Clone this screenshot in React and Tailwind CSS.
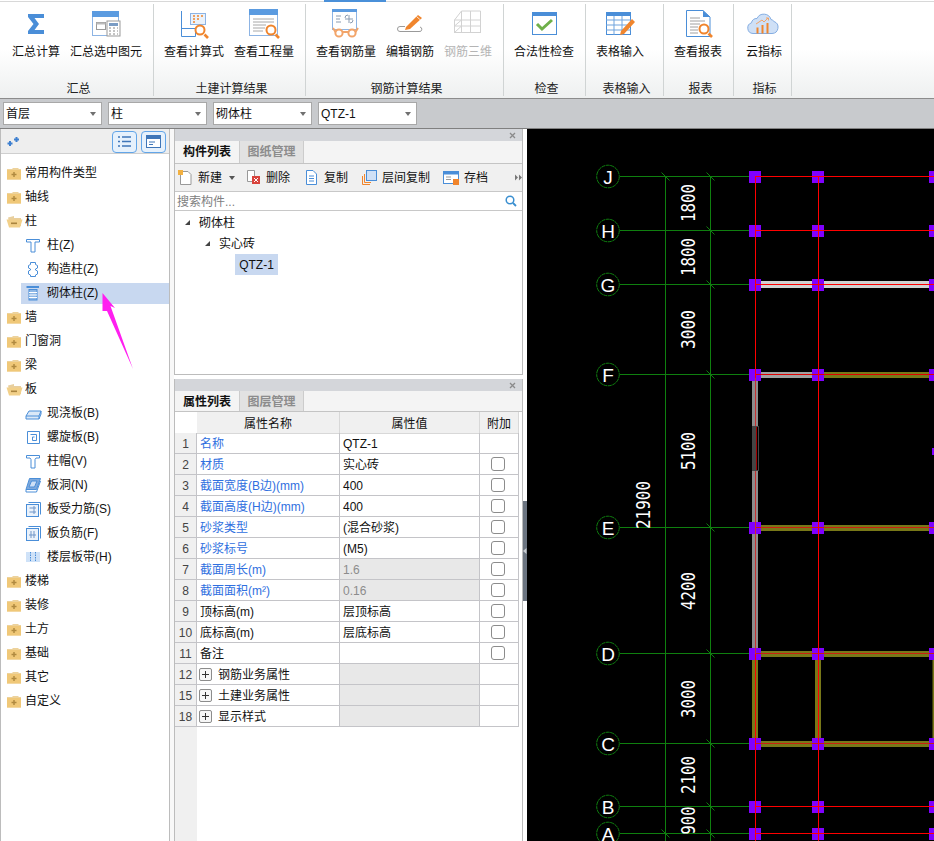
import React from "react";

const BLUE = "#4a8ed8";
const OR = "#f0852d";

const Mag = ({ x, y, r = 4.5 }) => (
  <g fill="none" stroke={OR}>
    <circle cx={x} cy={y} r={r} strokeWidth="2" fill="#fff" />
    <path d={`M${x + r} ${y + r}L${x + r + 3.5} ${y + r + 3.5}`} strokeWidth="2.6" />
  </g>
);

const Ribbon = {
  sigma: <path d="M12 7H28V11H18.5L23 17L18.5 23H28V27H12V24L17.5 17L12 10Z" fill={BLUE} />,
  sel: (
    <g>
      <rect x="6.5" y="4.5" width="26" height="24" fill="#fff" stroke="#8db4e4" />
      <rect x="6" y="4" width="27" height="6" fill="#5b9be0" />
      <rect x="10.5" y="15.5" width="9" height="7" fill="none" stroke="#9a9a9a" />
      <rect x="10.5" y="15.5" width="9" height="2" fill="#bbb" />
      <rect x="21" y="14" width="13" height="15" fill="#fff" stroke="#999" />
      <rect x="23" y="16" width="9" height="3" fill="#7a9cc4" />
      <path d="M23 21h2m2 0h2m2 0h1M23 24h2m2 0h2m2 0h1M23 27h2m2 0h2m2 0h1" stroke="#888" />
    </g>
  ),
  calc: (
    <g>
      <path d="M7.5 4V29.5H21.5V21.5H8" fill="none" stroke={BLUE} />
      <rect x="16.5" y="6.5" width="15" height="11" fill="#eaf2fb" stroke="#8db4e4" />
      <path d="M19 9h2m2 0h2m2 0h2M19 12h2m2 0h2M19 15h2" stroke={OR} strokeWidth="1.6" />
      <Mag x={26} y={23} />
    </g>
  ),
  qty: (
    <g>
      <rect x="5.5" y="2.5" width="28" height="26" fill="#fff" stroke="#8db4e4" />
      <rect x="5" y="2" width="29" height="6" fill="#5b9be0" />
      <path d="M9 12h21M9 15h21M9 18h13M9 21h12M9 24h10" stroke="#a8a8a8" />
      <Mag x={27} y={23} />
    </g>
  ),
  steel: (
    <g>
      <rect x="6.5" y="2.5" width="24" height="20" fill="#fff" stroke="#8db4e4" />
      <rect x="6" y="2" width="25" height="3" fill="#5b9be0" />
      <path d="M10 9h5M10 12h4M10 15h5M19 12h8M23 8v8" stroke="#8a9bb0" />
      <path d="M19 11a3 3 0 0 1 3-3M24 16a3 3 0 0 0 3-3" stroke="#8a9bb0" fill="none" />
      <g fill="#fff" stroke="#f2a469" strokeWidth="2">
        <circle cx="13" cy="26" r="3.6" />
        <circle cx="26" cy="26" r="3.6" />
        <path d="M16.5 25h6M9.5 25L7 21M29.5 25L32 21" fill="none" />
      </g>
    </g>
  ),
  edit: (
    <g>
      <path d="M15 19.5H10a2.3 2.3 0 0 0 0 5H29a2.3 2.3 0 0 0 1-4.5" fill="none" stroke="#9a9a9a" />
      <path d="M16 20L28 8L32 11L20 22L15 23Z" fill={OR} />
      <path d="M26.5 9.5L30.5 13" stroke="#fff" strokeWidth="0.8" />
    </g>
  ),
  three: (
    <g fill="none" stroke="#d2d2d2">
      <path d="M13.5 4V26M22.5 4V26M32.5 4V26M6.5 13V26M6.5 13L13.5 4M32.5 13H6.5M32.5 19H6.5M32.5 25.5H6.5M6.5 19L13.5 13M6.5 25.5L13.5 19M13.5 4H32.5" />
    </g>
  ),
  check: (
    <g>
      <rect x="8.5" y="5.5" width="24" height="22" fill="#fff" stroke={BLUE} />
      <rect x="8" y="5" width="25" height="4" fill={BLUE} />
      <path d="M13 17L18 22L28 13" fill="none" stroke="#6fb04a" strokeWidth="3" />
    </g>
  ),
  table: (
    <g>
      <rect x="6.5" y="5.5" width="24" height="22" fill="#fff" stroke={BLUE} />
      <rect x="6" y="5" width="25" height="4" fill={BLUE} />
      <path d="M6 13h25M6 18h25M6 23h25M14 9v19M22 9v19" stroke="#6ea3dd" />
      <path d="M21 24L32 12L35 15L24 27L20 28Z" fill={OR} />
    </g>
  ),
  report: (
    <g>
      <path d="M8.5 3.5H25L32 10V29.5H8.5Z" fill="#fff" stroke={BLUE} />
      <path d="M25 3.5V10H32Z" fill={BLUE} />
      <path d="M12 11h10M12 14h15M12 17h10M12 20h8M12 23h8M12 26h8" stroke="#a0a0a0" />
      <Mag x={26} y={22} />
    </g>
  ),
  cloud: (
    <g>
      <path d="M9 26.5A5.5 5.5 0 0 1 7.5 15.8A5 5 0 0 1 13 11.5A7.5 7.5 0 0 1 27 12.5A5 5 0 0 1 30 14.5A6.2 6.2 0 0 1 28 26.5Z" fill="#cfe0f6" stroke="#84ade2" />
      <path d="M12.5 20.5h2v6h-2zM17.5 18h2v8.5h-2zM22.5 16h2v10.5h-2z" fill={OR} />
      <path d="M12 17L18 13L20 15L24 11M22 11h2.5v2.5" fill="none" stroke="#f2a469" />
    </g>
  ),
};

const RibbonBtn = ({ icon, label, muted }) => (
  <div className="flex flex-col items-center">
    <div className="w-[40px] h-[32px] mt-[3px]">
      <svg width="40" height="32" viewBox="0 0 40 32">{Ribbon[icon]}</svg>
    </div>
    <div className={`text-[12px] leading-[14px] mt-[6px] whitespace-nowrap ${muted ? "text-[#b4b4b4]" : "text-[#111]"}`}>{label}</div>
  </div>
);

const groups = [
  { w: "w-[154px]", pl: "pl-[12px]", label: "汇总", items: [["sigma", "汇总计算"], ["sel", "汇总选中图元"]] },
  { w: "w-[152px]", pl: "pl-[10px]", label: "土建计算结果", items: [["calc", "查看计算式"], ["qty", "查看工程量"]] },
  { w: "w-[198px]", pl: "pl-[10px]", label: "钢筋计算结果", items: [["steel", "查看钢筋量"], ["edit", "编辑钢筋"], ["three", "钢筋三维", true]] },
  { w: "w-[82px]", pl: "pl-[10px]", label: "检查", items: [["check", "合法性检查"]] },
  { w: "w-[78px]", pl: "pl-[10px]", label: "表格输入", items: [["table", "表格输入"]] },
  { w: "w-[70px]", pl: "pl-[10px]", label: "报表", items: [["report", "查看报表"]] },
  { w: "w-[58px]", pl: "pl-[10px]", label: "指标", items: [["cloud", "云指标"]] },
];

const Combo = ({ label, w = "w-[99px]" }) => (
  <div className={`${w} h-[23px] bg-white border border-[#a8a8a8] flex items-center justify-between pl-[2px] pr-[5px] text-[12px] text-[#111]`}>
    <span className="pt-[1px]">{label}</span>
    <span className="w-0 h-0 border-x-[3.5px] border-x-transparent border-t-[4px] border-t-[#707070]" />
  </div>
);

const Folder = ({ open }) => (
  <svg width="17" height="13" viewBox="0 0 17 13" className="shrink-0">
    {open ? (
      <g>
        <path d="M2 2.5L8 1V3H15V11H4Z" fill="#e8cf9e" />
        <path d="M0.5 4.5H16.5L14 12.5H3Z" fill="#f2d089" />
        <rect x="5" y="7.5" width="6" height="1.6" fill="#a9843e" />
      </g>
    ) : (
      <g>
        <path d="M1 2H6L7 1H12L13 2H15V12.5H1Z" fill="#edd29b" />
        <rect x="1" y="3" width="14" height="9.5" fill="#f0c878" />
        <path d="M5.5 7.5h5M8 5v5" stroke="#b08a40" strokeWidth="1.5" />
      </g>
    )}
  </svg>
);

const S = "#4a8ed8";
const Sub = {
  col: <path d="M1.5 2.5H14.5V5H10V15H6V5H1.5Z" fill="#fff" stroke={S} />,
  gz: <path d="M5.5 1.5H10.5V3.5L12.5 4.5V7L10.5 8V9L12.5 10V13L10.5 14V15.5H5.5V14L3.5 13V10L5.5 9V8L3.5 7V4.5L5.5 3.5Z" fill="#fff" stroke={S} />,
  brick: (
    <g>
      <path d="M1.5 2H14" stroke={S} strokeWidth="2" />
      <rect x="4" y="4.5" width="8" height="10.5" fill="#8fb8e6" stroke={S} />
      <path d="M4 7.5h8M4 10h8M4 12.5h8" stroke="#fff" />
    </g>
  ),
  slab: <path d="M1 11L4 6H16L14 11ZM1 11V14H14V11M14 14L16 9V6" fill="#dbe8f7" stroke={S} />,
  spiral: <path d="M2.5 2.5H14.5V14.5H2.5ZM5.5 5.5H11.5V11.5H7.5V8H9.5" fill="none" stroke={S} />,
  cap: <path d="M1.5 2.5H14.5V5H11L10 6.5V15H6V6.5L5 5H1.5Z" fill="#fff" stroke={S} />,
  hole: (
    <g>
      <path d="M4.5 1.5H15.5L11.5 12.5H1Z" fill="#7fa9dc" stroke={S} />
      <path d="M1 12.5V15H11.5L15.5 4" fill="none" stroke={S} />
      <path d="M6.5 4H12L9.5 10H4Z" fill="#cfe0f6" stroke={S} />
    </g>
  ),
  r1: (
    <g fill="none" stroke={S}>
      <rect x="1.5" y="3.5" width="12" height="12" fill="#eaf2fb" />
      <path d="M3.5 1.5H15.5V13.5" />
      <path d="M4.5 7H11M4.5 11H11M9 5V13" stroke="#6e95c8" />
    </g>
  ),
  r2: (
    <g fill="none" stroke={S}>
      <rect x="1.5" y="3.5" width="12" height="12" fill="#eaf2fb" />
      <path d="M3.5 1.5H15.5V13.5" />
      <path d="M4 10H11M6 6V13M9 6V13" stroke="#6e95c8" />
    </g>
  ),
  band: (
    <g>
      <rect x="1" y="3" width="14" height="10" fill="#cfe2f8" />
      <path d="M5.5 3V13M10.5 3V13" stroke={S} strokeDasharray="1.5 1" />
    </g>
  ),
};

const TreeTop = ({ label, open }) => (
  <div className="h-[24px] flex items-center pl-[5px] gap-[2px] text-[12px] text-[#111]">
    <div className="w-[17px] flex justify-center"><Folder open={open} /></div>
    <span>{label}</span>
  </div>
);

const TreeSub = ({ icon, label, active }) => (
  <div className="h-[24px] flex items-center">
    <div className={`ml-[20px] flex-1 h-[21px] flex items-center pl-[4px] gap-[5px] text-[12px] text-[#111] ${active ? "bg-[#c8d8f0]" : ""}`}>
      <svg width="17" height="17" viewBox="0 0 17 17" className="shrink-0">{Sub[icon]}</svg>
      <span>{label}</span>
    </div>
  </div>
);

const ToolItem = ({ w = "", children, label, ml = "" }) => (
  <div className={`flex items-center gap-[4px] ${ml} ${w}`}>
    <svg width="17" height="17" viewBox="0 0 17 17" className="shrink-0">{children}</svg>
    <span className="whitespace-nowrap">{label}</span>
  </div>
);

const PanelHead = () => (
  <div className="h-[12px] bg-[#d4d6da] flex items-center justify-end pr-[6px]">
    <svg width="7" height="7" viewBox="0 0 7 7"><path d="M1 1L6 6M6 1L1 6" stroke="#8a8a8a" strokeWidth="1.3" /></svg>
  </div>
);

const Tabs = ({ a, b, h, nudge }) => (
  <div className={`${h} bg-[#f4f4f4] border-b border-[#c4c4c4] flex text-[12px]`}>
    <div className={`w-[64px] flex items-center justify-center font-bold text-[#111] ${nudge}`}>{a}</div>
    <div className={`w-[65px] flex items-center justify-center bg-[#e2e2e2] border-x border-[#cccccc] text-[#8c8c8c] font-bold ${nudge}`}>{b}</div>
  </div>
);

const rows = [
  ["1", "名称", "QTZ-1", 1, 0, 0],
  ["2", "材质", "实心砖", 1, 0, 1],
  ["3", "截面宽度(B边)(mm)", "400", 1, 0, 1],
  ["4", "截面高度(H边)(mm)", "400", 1, 0, 1],
  ["5", "砂浆类型", "(混合砂浆)", 1, 0, 1],
  ["6", "砂浆标号", "(M5)", 1, 0, 1],
  ["7", "截面周长(m)", "1.6", 1, 1, 1],
  ["8", "截面面积(m²)", "0.16", 1, 1, 1],
  ["9", "顶标高(m)", "层顶标高", 0, 0, 1],
  ["10", "底标高(m)", "层底标高", 0, 0, 1],
  ["11", "备注", "", 0, 0, 1],
];
const groupRows = [["12", "钢筋业务属性"], ["15", "土建业务属性"], ["18", "显示样式"]];

const gridCols = "grid grid-cols-[22px_143px_140px_39px]";
const cell = "border-r border-b border-[#c4c4c8] flex items-center";

const PropRow = ({ r }) => (
  <div className={`${gridCols} h-[21px] text-[12px]`}>
    <div className={`${cell} justify-center bg-[#f0f0f0] text-[#444] pt-[1px]`}>{r[0]}</div>
    <div className={`${cell} pl-[3px] pt-[1px] whitespace-nowrap ${r[3] ? "text-[#2f6fe0]" : "text-[#111]"}`}>{r[1]}</div>
    <div className={`${cell} pl-[3px] pt-[1px] ${r[4] ? "bg-[#e8e8e8] text-[#8c8c8c]" : "text-[#111]"}`}>{r[2]}</div>
    <div className={`${cell} justify-center pr-[2px]`}>
      {r[5] ? <div className="w-[14px] h-[14px] rounded-[3px] border border-[#8c8c8c] bg-white" /> : null}
    </div>
  </div>
);

const GroupRow = ({ n, t }) => (
  <div className={`${gridCols} h-[21px] text-[12px]`}>
    <div className={`${cell} justify-center bg-[#f0f0f0] text-[#444] pt-[1px]`}>{n}</div>
    <div className={`${cell} pl-[2px] gap-[6px] text-[#111]`}>
      <div className="w-[13px] h-[13px] rounded-[2px] border border-[#8c8c8c] bg-[#f6f6f6] flex items-center justify-center">
        <svg width="7" height="7" viewBox="0 0 7 7"><path d="M0 3.5H7M3.5 0V7" stroke="#333" /></svg>
      </div>
      <span className="pt-[1px]">{t}</span>
    </div>
    <div className={`${cell} bg-[#e8e8e8]`} />
    <div className={cell} />
  </div>
);

const H = { J: 176.5, H: 230.5, G: 284.5, F: 374.5, E: 527.5, D: 653.5, C: 743.5, B: 806.5, A: 833.5 };
const GREEN = "#0f7f0f";
const OLIVE = "#787818";
const RED = "#ff0000";
const PUR = "#8000ff";

const Dim = ({ x, y, t, len }) => (
  <text
    x={x}
    y={y}
    transform={`rotate(-90 ${x} ${y})`}
    fill="#fff"
    fontFamily="'DejaVu Sans Mono', monospace"
    fontSize="19"
    textAnchor="middle"
    dominantBaseline="central"
    textLength={len}
    lengthAdjust="spacingAndGlyphs"
  >
    {t}
  </text>
);

const Cad = () => (
  <svg width="407" height="712" viewBox="527 129 407 712" className="block bg-black shrink-0">
    {/* walls */}
    <rect x="755" y="281" width="179" height="7" fill="#d0d0d0" />
    <rect x="755" y="372" width="63" height="6" fill="#a0a0a0" />
    <rect x="818" y="372" width="116" height="6" fill={OLIVE} />
    <rect x="752" y="375" width="6" height="279" fill="#8c8c8c" />
    <rect x="755" y="525" width="179" height="6" fill={OLIVE} />
    <rect x="755" y="651" width="179" height="6" fill={OLIVE} />
    <rect x="755" y="741" width="179" height="6" fill={OLIVE} />
    <rect x="752" y="654" width="6" height="90" fill={OLIVE} />
    <rect x="815" y="654" width="6" height="90" fill={OLIVE} />
    <rect x="932.5" y="654" width="2" height="90" fill={OLIVE} />
    {/* green grid */}
    {Object.values(H).map((y) => (
      <path key={y} d={`M620 ${y}H756`} stroke={GREEN} fill="none" />
    ))}
    <path d="M665.5 176V841M710.5 176V841" stroke={GREEN} fill="none" />
    {Object.values(H).map((y) => (
      <path key={y} d={`M706.5 ${y - 4}L714.5 ${y + 4}`} stroke={GREEN} fill="none" />
    ))}
    <path d="M661.5 172.5L669.5 180.5M661.5 829.5L669.5 837.5" stroke={GREEN} fill="none" />
    {/* columns */}
    {Object.values(H).flatMap((y) =>
      [749, 812, 929].map((x) => <rect key={`${x}-${y}`} x={x} y={y - 5.5} width="12" height="12" fill={PUR} />)
    )}
    <rect x="932" y="448" width="2" height="7" fill={PUR} />
    {/* red axes */}
    <path d={`M755 ${H.J}H934M755 ${H.H}H934M755 ${H.G}H934M755 ${H.B}H934M755 ${H.A}H934`} stroke={RED} fill="none" />
    <path d={`M755 ${H.F}H934`} stroke="#e00000" fill="none" />
    <path d={`M755 ${H.E}H934M755 ${H.D}H934M755 ${H.C}H934`} stroke="#c82010" fill="none" />
    <rect x="755" y="176" width="1" height="665" fill={RED} />
    <rect x="755" y="378" width="1" height="276" fill="#c83030" />
    <rect x="818" y="176" width="1" height="665" fill={RED} />
    {/* door */}
    <rect x="752" y="426" width="7" height="45" fill="#444444" />
    <rect x="757" y="427" width="1" height="43" fill="#000000" />
    <rect x="756" y="427" width="1" height="43" fill="#a00000" />
    {/* axis bubbles */}
    {Object.entries(H).map(([k, y]) => (
      <g key={k}>
        <circle cx="608" cy={y} r="11.3" fill="#000" stroke={GREEN} strokeDasharray="4 0.6" />
        <text
          x="608"
          y={y + 0.5}
          fill="#fff"
          fontFamily="'Liberation Sans', sans-serif"
          fontSize="19"
          textAnchor="middle"
          dominantBaseline="central"
        >
          {k}
        </text>
      </g>
    ))}
    <Dim x={687.5} y={203} t="1800" len={38} />
    <Dim x={687.5} y={257} t="1800" len={38} />
    <Dim x={687.5} y={329.5} t="3000" len={39} />
    <Dim x={687.5} y={451} t="5100" len={38} />
    <Dim x={642.5} y={505} t="21900" len={48} />
    <Dim x={687.5} y={591} t="4200" len={38} />
    <Dim x={687.5} y={699} t="3000" len={38} />
    <Dim x={687.5} y={775} t="2100" len={38} />
    <Dim x={687.5} y={820.5} t="900" len={28} />
  </svg>
);

export default function App() {
  return (
    <div className="relative w-[934px] h-[841px] overflow-hidden bg-white font-['Liberation_Sans','Noto_Sans_CJK_SC',sans-serif]">
      {/* ribbon */}
      <div className="h-[99px] bg-gradient-to-b from-white from-50% to-[#eef0f0] border-b border-[#8c8c8c]">
        <div className="h-[2px] border-b border-[#d8d8d8]">
          <div className="ml-[324px] w-[62px] h-[2px] bg-[#4a90d9]" />
        </div>
        <div className="flex mt-[2px]">
          {groups.map((g) => (
            <div key={g.label} className={`${g.w} h-[92px] flex flex-col border-r border-[#d0d4d4]`}>
              <div className={`flex gap-[10px] ${g.pl} h-[78px] shrink-0`}>
                {g.items.map((i) => (
                  <RibbonBtn key={i[1]} icon={i[0]} label={i[1]} muted={i[2]} />
                ))}
              </div>
              <div className="text-[12px] leading-[14px] text-center pl-[4px] text-[#222]">{g.label}</div>
            </div>
          ))}
        </div>
      </div>
      {/* selectors */}
      <div className="h-[30px] bg-[#c8cacd] border-b border-[#808080] flex items-center gap-[6px] pl-[3px]">
        <Combo label="首层" />
        <Combo label="柱" />
        <Combo label="砌体柱" />
        <Combo label="QTZ-1" />
      </div>
      {/* main */}
      <div className="flex h-[712px]">
        {/* sidebar */}
        <div className="w-[170px] shrink-0 border-x border-[#bcbcbc] flex flex-col">
          <div className="h-[25px] bg-[#eeeeee] border-b border-[#cfcfcf] flex items-center justify-between pl-[6px] pr-[3px]">
            <svg width="14" height="11" viewBox="0 0 14 11"><path d="M3 5V10M0.5 7.5H5.5M9.5 1V6M7 3.5H12" stroke="#3f80d0" strokeWidth="2" fill="none" /></svg>
            <div className="flex gap-[4px] pt-[1px]">
              <div className="w-[25px] h-[22px] rounded-[4px] border border-[#62a5e8] bg-[#e6f1fc] flex items-center justify-center">
                <svg width="13" height="13" viewBox="0 0 13 13"><path d="M0 2h2M4 2h9M0 6.500h2M4 6.500h9M0 11h2M4 11h9" stroke="#3f76b8" strokeWidth="1.500" /></svg>
              </div>
              <div className="w-[25px] h-[22px] rounded-[4px] border border-[#62a5e8] bg-[#e6f1fc] flex items-center justify-center">
                <svg width="15" height="13" viewBox="0 0 15 13"><rect x="0.500" y="0.500" width="14" height="12" fill="#fff" stroke="#3f76b8" /><rect x="0.500" y="0.500" width="14" height="3.500" fill="#3f76b8" /><path d="M3 7h6M3 9.500h4" stroke="#3f76b8" /></svg>
              </div>
            </div>
          </div>
          <div className="pt-[7px]">
            <TreeTop label="常用构件类型" />
            <TreeTop label="轴线" />
            <TreeTop label="柱" open />
            <TreeSub icon="col" label="柱(Z)" />
            <TreeSub icon="gz" label="构造柱(Z)" />
            <TreeSub icon="brick" label="砌体柱(Z)" active />
            <TreeTop label="墙" />
            <TreeTop label="门窗洞" />
            <TreeTop label="梁" />
            <TreeTop label="板" open />
            <TreeSub icon="slab" label="现浇板(B)" />
            <TreeSub icon="spiral" label="螺旋板(B)" />
            <TreeSub icon="cap" label="柱帽(V)" />
            <TreeSub icon="hole" label="板洞(N)" />
            <TreeSub icon="r1" label="板受力筋(S)" />
            <TreeSub icon="r2" label="板负筋(F)" />
            <TreeSub icon="band" label="楼层板带(H)" />
            <TreeTop label="楼梯" />
            <TreeTop label="装修" />
            <TreeTop label="土方" />
            <TreeTop label="基础" />
            <TreeTop label="其它" />
            <TreeTop label="自定义" />
          </div>
        </div>
        <div className="w-[4px] shrink-0 bg-[#f8f8f8]" />
        {/* middle */}
        <div className="w-[349px] shrink-0 flex flex-col gap-[4px]">
          <div className="h-[246px] border-x border-b border-[#bcbcbc] flex flex-col">
            <PanelHead />
            <Tabs a="构件列表" b="图纸管理" h="h-[23px]" nudge="" />
            <div className="h-[28px] bg-[#f0f0f0] border-b border-[#c8c8c8] flex items-center pl-[2px] text-[12px] text-[#111]">
              <ToolItem label="新建" w="w-[45px]">
                <path d="M3.500 2.500H11L14 5.500V15.500H3.500Z" fill="#fff" stroke="#999" />
                <rect x="1" y="1" width="5" height="5" fill="#f2b040" />
              </ToolItem>
              <span className="ml-[7px] w-0 h-0 border-x-[3px] border-x-transparent border-t-[4px] border-t-[#555]" />
              <ToolItem label="删除" ml="ml-[10px]">
                <path d="M2.500 1.500H9.500V12.500H2.500Z" fill="#fff" stroke="#999" />
                <rect x="7" y="7" width="8" height="8" fill="#d9433c" />
                <path d="M9 9L13 13M13 9L9 13" stroke="#fff" />
              </ToolItem>
              <ToolItem label="复制" ml="ml-[13px]">
                <path d="M3.500 1.500H10L13.500 5V15.500H3.500Z" fill="#fff" stroke={S} />
                <path d="M6 7h5M6 9.500h5M6 12h5" stroke={S} />
              </ToolItem>
              <ToolItem label="层间复制" ml="ml-[13px]">
                <path d="M1.500 7V15.500H9" fill="none" stroke={OR} />
                <path d="M3.500 5V13.500H10" fill="none" stroke={OR} />
                <rect x="5.500" y="1.500" width="10" height="10" fill="#cfe0f6" stroke={S} />
              </ToolItem>
              <ToolItem label="存档" ml="ml-[13px]">
                <rect x="0.500" y="2.500" width="15" height="12" fill="#fff" stroke={S} />
                <rect x="0.500" y="2.500" width="15" height="3" fill={S} />
                <path d="M3 8h5M3 10.500h5" stroke="#999" />
                <rect x="10" y="10" width="6" height="6" fill={OR} />
              </ToolItem>
              <svg width="7" height="7" viewBox="0 0 7 7" className="ml-[27px]"><path d="M0 0.500L3 3.500L0 6.500ZM4 0.500L7 3.500L4 6.500Z" fill="#777" /></svg>
            </div>
            <div className="h-[19px] border-b border-[#c8c8c8] flex items-center justify-between pl-[2px] pr-[5px] text-[12px] text-[#808080]">
              <span className="pt-[2px]">搜索构件...</span>
              <svg width="12" height="12" viewBox="0 0 12 12"><circle cx="5" cy="5" r="3.800" fill="none" stroke="#3a8fd0" strokeWidth="1.500" /><path d="M8 8L11 11" stroke="#3a8fd0" strokeWidth="1.800" /></svg>
            </div>
            <div className="flex-1 text-[12px] text-[#111] pt-[1px]">
              <div className="h-[21px] flex items-center pl-[10px] gap-[9px]">
                <svg width="5" height="5" viewBox="0 0 5 5"><path d="M0 5L5 0V5Z" fill="#444" /></svg>
                <span className="pt-[1px]">砌体柱</span>
              </div>
              <div className="h-[21px] flex items-center pl-[30px] gap-[9px]">
                <svg width="5" height="5" viewBox="0 0 5 5"><path d="M0 5L5 0V5Z" fill="#444" /></svg>
                <span className="pt-[1px]">实心砖</span>
              </div>
              <div className="ml-[60px] w-[43px] h-[21px] flex items-center justify-center bg-[#c8d8f0]">QTZ-1</div>
            </div>
          </div>
          <div className="flex-1 border-x border-[#bcbcbc] flex flex-col">
            <PanelHead />
            <Tabs a="属性列表" b="图层管理" h="h-[21px]" nudge="pt-[2px]" />
            <div className="flex-1 flex flex-col bg-white">
              <div className={`${gridCols} h-[21px] text-[12px] text-[#111]`}>
                <div className="bg-white" />
                <div className="bg-[#f0f0f0] border-r border-b border-[#d8d8d8] flex items-center justify-center pt-[3px]">属性名称</div>
                <div className="bg-[#f0f0f0] border-r border-b border-[#d8d8d8] flex items-center justify-center pt-[3px]">属性值</div>
                <div className="bg-[#f0f0f0] border-r border-b border-[#d8d8d8] flex items-center justify-center pt-[3px]">附加</div>
              </div>
              {rows.map((r) => <PropRow key={r[0]} r={r} />)}
              {groupRows.map((g) => <GroupRow key={g[0]} n={g[0]} t={g[1]} />)}
              <div className="flex-1 w-[22px] bg-[#f0f0f0]" />
            </div>
          </div>
        </div>
        {/* splitter */}
        <div className="w-[4px] shrink-0 bg-white pt-[372px]">
          <div className="w-[4px] h-[100px] bg-[#6b7480] flex items-center">
            <svg width="4" height="6" viewBox="0 0 4 6"><path d="M3.500 0V6L0 3Z" fill="#c8ccd0" /></svg>
          </div>
        </div>
        <Cad />
      </div>
      {/* annotation arrow */}
      <svg width="40" height="82" viewBox="0 0 40 82" className="absolute left-[100px] top-[291px]">
        <path d="M2.500 2L15 17L10.500 15L33 78L7 20L2.500 20Z" fill="#ff1ff0" />
      </svg>
    </div>
  );
}
